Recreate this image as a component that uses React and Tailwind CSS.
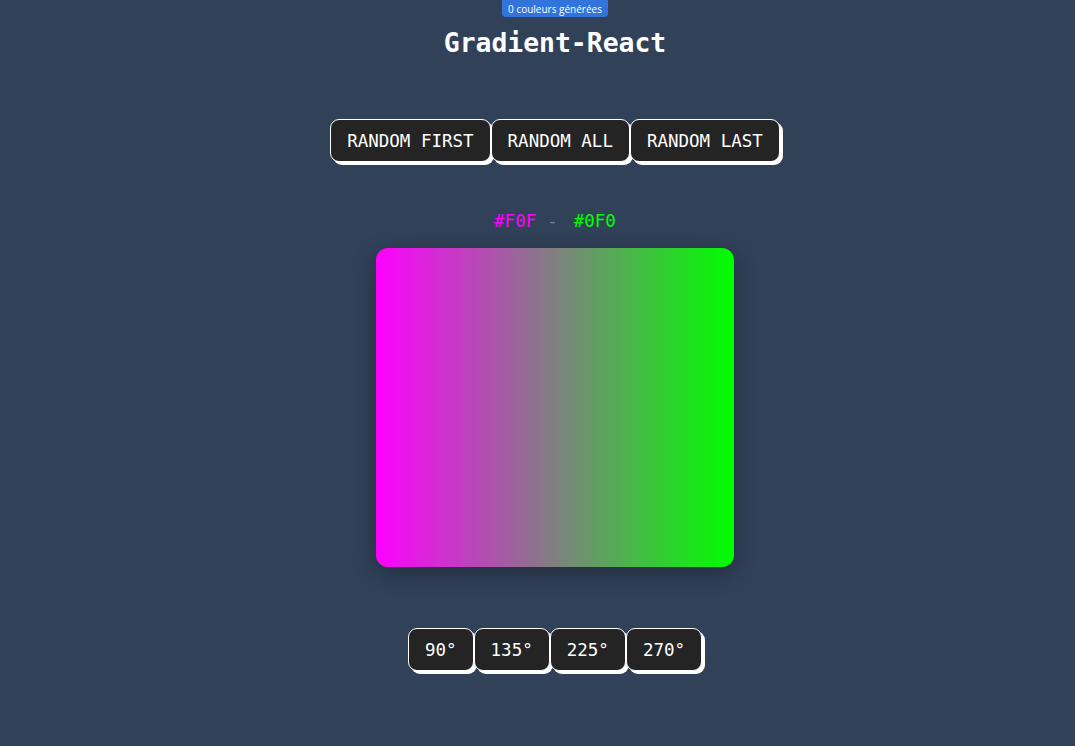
import React from "react";

const mono = { fontFamily: '"DejaVu Sans Mono", "Liberation Mono", monospace' };

function Btn({ children }) {
  return (
    <button
      className="h-[43px] px-4 flex items-center justify-center bg-[#242424] text-white text-[17.5px] leading-[1.2] border border-white rounded-[9px] shadow-[3px_3px_0_#ffffff] pt-[2px]"
      style={mono}
    >
      {children}
    </button>
  );
}

export default function App() {
  return (
    <div className="min-h-screen w-full bg-slate-700 flex flex-col items-center pl-[35px]" style={mono}>
      <div
        className="h-[17px] w-[106px] flex items-center justify-center bg-[#3273dc] rounded-b-[4px] text-white text-[10px] leading-none"
        style={{ fontFamily: '"Open Sans", "Noto Sans", sans-serif' }}
      >
        0 couleurs générées
      </div>
      <h1 className="mt-[10px] text-[26.4px] leading-[1.2] font-bold text-white">Gradient-React</h1>
      <div className="mt-[60px] flex">
        <Btn>RANDOM FIRST</Btn>
        <Btn>RANDOM ALL</Btn>
        <Btn>RANDOM LAST</Btn>
      </div>
      <div className="mt-[49px] flex text-[17.5px] leading-[1.2]">
        <span className="text-[#ff00ff]">#F0F</span>
        <span className="ml-[11px] text-[#777f8c]">-</span>
        <span className="ml-[16px] text-[#00ff00]">#0F0</span>
      </div>
      <div className="mt-[16px] w-[358px] h-[319px] rounded-[12px] bg-[linear-gradient(90deg,#ff00ff,#00ff00)] shadow-[0_6px_22px_rgba(0,0,0,0.3)]" />
      <div className="mt-[61px] flex">
        <Btn>90°</Btn>
        <Btn>135°</Btn>
        <Btn>225°</Btn>
        <Btn>270°</Btn>
      </div>
    </div>
  );
}
